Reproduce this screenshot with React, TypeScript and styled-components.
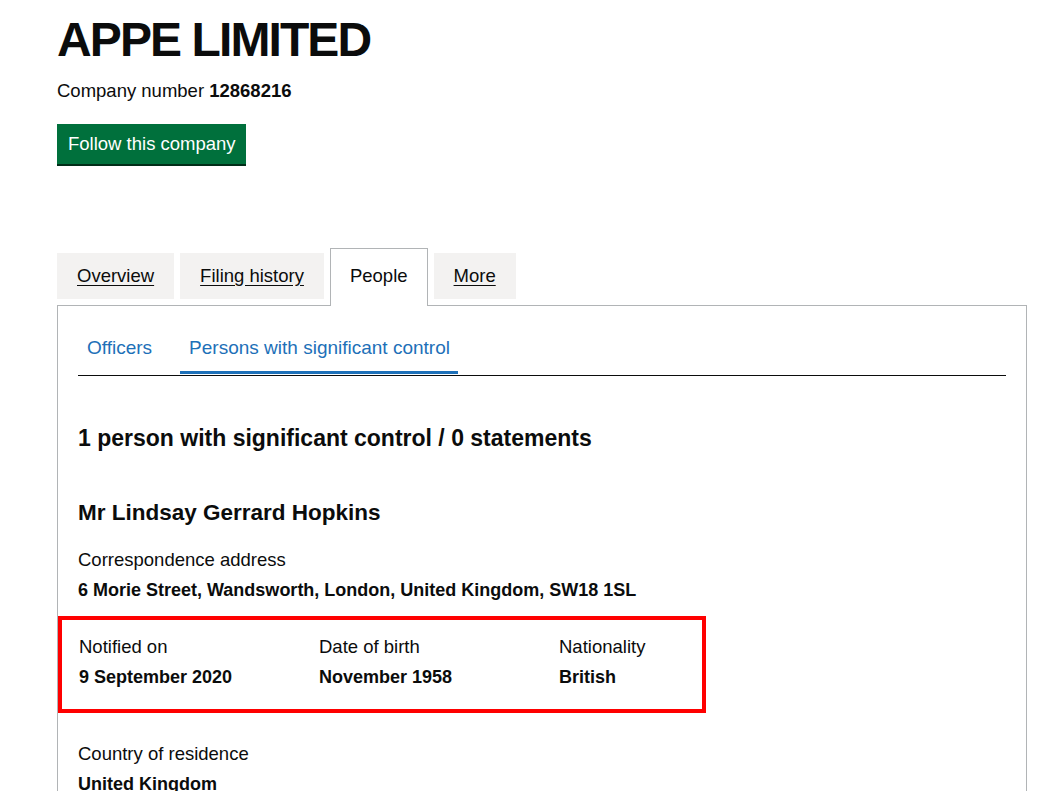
import React from "react";
import styled, { createGlobalStyle } from "styled-components";

const GlobalStyle = createGlobalStyle`
  html, body {
    margin: 0;
    padding: 0;
    background: #ffffff;
  }
  body {
    font-family: "Liberation Sans", Arial, sans-serif;
    color: #0b0c0c;
  }
`;

const Page = styled.div`
  padding: 14px 36px 0 57px;
  overflow: hidden;
  height: 791px;
  box-sizing: border-box;
`;

const Title = styled.h1`
  margin: 0;
  font-size: 48px;
  line-height: 52px;
  font-weight: 700;
  letter-spacing: -1.9px;
`;

const CompanyNumber = styled.p`
  margin: 13px 0 0;
  font-size: 18.5px;
  line-height: 24px;

  strong {
    font-weight: 700;
  }
`;

const FollowButton = styled.button`
  margin-top: 21px;
  display: block;
  height: 40px;
  padding: 0 10px 0 11px;
  border: 0;
  background: #00703c;
  box-shadow: 0 2px 0 #002d18;
  color: #ffffff;
  font-family: inherit;
  font-size: 18.5px;
  cursor: pointer;
`;

const TabList = styled.div`
  margin-top: 84px;
  display: flex;
  align-items: flex-start;
  gap: 6px;
`;

const Tab = styled.a<{ $active?: boolean }>`
  display: block;
  box-sizing: border-box;
  height: ${(p) => (p.$active ? "58px" : "46px")};
  margin-top: ${(p) => (p.$active ? "0" : "5px")};
  margin-bottom: ${(p) => (p.$active ? "-1px" : "0")};
  padding: ${(p) => (p.$active ? "15px 19px 0" : "11px 20px 0")};
  background: ${(p) => (p.$active ? "#ffffff" : "#f3f2f1")};
  border: ${(p) => (p.$active ? "1px solid #b1b4b6" : "0")};
  border-bottom: 0;
  color: #0b0c0c;
  font-size: 18.5px;
  line-height: 24px;
  text-decoration: ${(p) => (p.$active ? "none" : "underline")};
  text-underline-offset: 3px;
  position: relative;
  z-index: 1;
`;

const Panel = styled.div`
  border: 1px solid #b1b4b6;
  padding: 30px 20px 0;
  min-height: 600px;
`;

const SubNav = styled.div`
  display: flex;
  gap: 20px;
  border-bottom: 1px solid #0b0c0c;
`;

const SubTab = styled.a<{ $active?: boolean }>`
  display: block;
  padding: 0 8px 11px 9px;
  margin-bottom: 1px;
  color: #1d70b8;
  font-size: 19px;
  line-height: 24px;
  text-decoration: none;
  border-bottom: 3px solid ${(p) => (p.$active ? "#1d70b8" : "transparent")};
`;

const CountHeading = styled.h2`
  margin: 47px 0 0;
  font-size: 23px;
  line-height: 30px;
  font-weight: 700;
`;

const PersonName = styled.h2`
  margin: 46px 0 0;
  font-size: 22.5px;
  line-height: 28px;
  font-weight: 700;
`;

const Field = styled.dl<{ $top?: number }>`
  margin: ${(p) => p.$top ?? 20}px 0 0;
`;

const Label = styled.dt`
  font-size: 18.5px;
  line-height: 24px;
`;

const Value = styled.dd`
  margin: 6px 0 0;
  font-size: 18px;
  line-height: 24px;
  font-weight: 700;
`;

const Highlight = styled.div`
  margin: 14px 0 0 -20px;
  width: 648px;
  box-sizing: border-box;
  border: 4px solid #ff0000;
  padding: 15px 16px 20px 17px;
  display: grid;
  grid-template-columns: 240px 240px 1fr;
`;

export default function App() {
  return (
    <>
      <GlobalStyle />
      <Page>
        <Title>APPE LIMITED</Title>
        <CompanyNumber>
          Company number <strong>12868216</strong>
        </CompanyNumber>
        <FollowButton>Follow this company</FollowButton>

        <TabList>
          <Tab href="#">Overview</Tab>
          <Tab href="#">Filing history</Tab>
          <Tab $active>People</Tab>
          <Tab href="#">More</Tab>
        </TabList>

        <Panel>
          <SubNav>
            <SubTab href="#">Officers</SubTab>
            <SubTab href="#" $active>
              Persons with significant control
            </SubTab>
          </SubNav>

          <CountHeading>1 person with significant control / 0 statements</CountHeading>

          <PersonName>Mr Lindsay Gerrard Hopkins</PersonName>

          <Field $top={21}>
            <Label>Correspondence address</Label>
            <Value>6 Morie Street, Wandsworth, London, United Kingdom, SW18 1SL</Value>
          </Field>

          <Highlight>
            <Field $top={0}>
              <Label>Notified on</Label>
              <Value>9 September 2020</Value>
            </Field>
            <Field $top={0}>
              <Label>Date of birth</Label>
              <Value>November 1958</Value>
            </Field>
            <Field $top={0}>
              <Label>Nationality</Label>
              <Value>British</Value>
            </Field>
          </Highlight>

          <Field $top={29}>
            <Label>Country of residence</Label>
            <Value>United Kingdom</Value>
          </Field>
        </Panel>
      </Page>
    </>
  );
}
